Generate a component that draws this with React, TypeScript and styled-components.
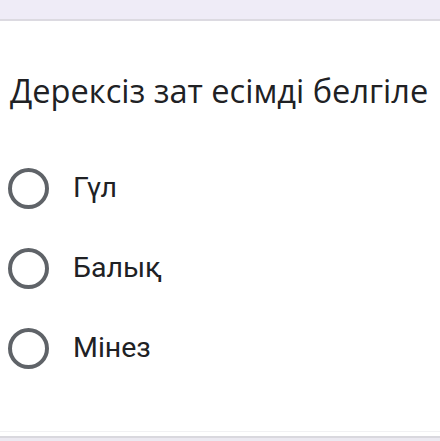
import styled, { createGlobalStyle } from "styled-components";

const Global = createGlobalStyle`
  html, body {
    margin: 0;
    padding: 0;
    background: #ffffff;
  }
  body {
    font-family: Roboto, "Noto Sans", sans-serif;
  }
`;

const Page = styled.div`
  width: 440px;
  height: 441px;
  display: flex;
  flex-direction: column;
  background: #efecf7;
  overflow: hidden;
`;

const TopBand = styled.div`
  height: 19px;
  flex: none;
  border-bottom: 2px solid #dcdae1;
`;

const BottomBand = styled.div`
  height: 3px;
  flex: none;
  background: #ebe9f1;
`;

const Card = styled.div`
  flex: 1;
  background: #ffffff;
  display: flex;
  flex-direction: column;
  border-bottom: 2px solid #d9d8de;
`;

const Question = styled.div`
  padding: 50px 0 0 10px;
  font-family: "Open Sans", sans-serif;
  font-size: 32.6px;
  line-height: 40px;
  color: #202124;
  white-space: nowrap;
`;

const Options = styled.div`
  display: flex;
  flex-direction: column;
  margin-top: 37px;
`;

const Option = styled.label`
  height: 80px;
  display: flex;
  align-items: center;
  gap: 24px;
  padding-left: 8px;
`;

const Radio = styled.span`
  width: 41px;
  height: 41px;
  box-sizing: border-box;
  border: 4px solid #5f6368;
  border-radius: 50%;
  flex: none;
`;

const OptionText = styled.span`
  font-family: Roboto, sans-serif;
  font-size: 28.5px;
  color: #202124;
  padding-bottom: 2px;
`;

const Spacer = styled.div`
  flex: 1;
`;

const FaintLine = styled.div`
  height: 1px;
  background: #f1f1f3;
  margin-bottom: 4px;
`;

const options = ["Гүл", "Балық", "Мінез"];

export default function App() {
  return (
    <Page>
      <Global />
      <TopBand />
      <Card>
        <Question>Дерексіз зат есімді белгіле</Question>
        <Options>
          {options.map((o) => (
            <Option key={o}>
              <Radio />
              <OptionText>{o}</OptionText>
            </Option>
          ))}
        </Options>
        <Spacer />
        <FaintLine />
      </Card>
      <BottomBand />
    </Page>
  );
}
